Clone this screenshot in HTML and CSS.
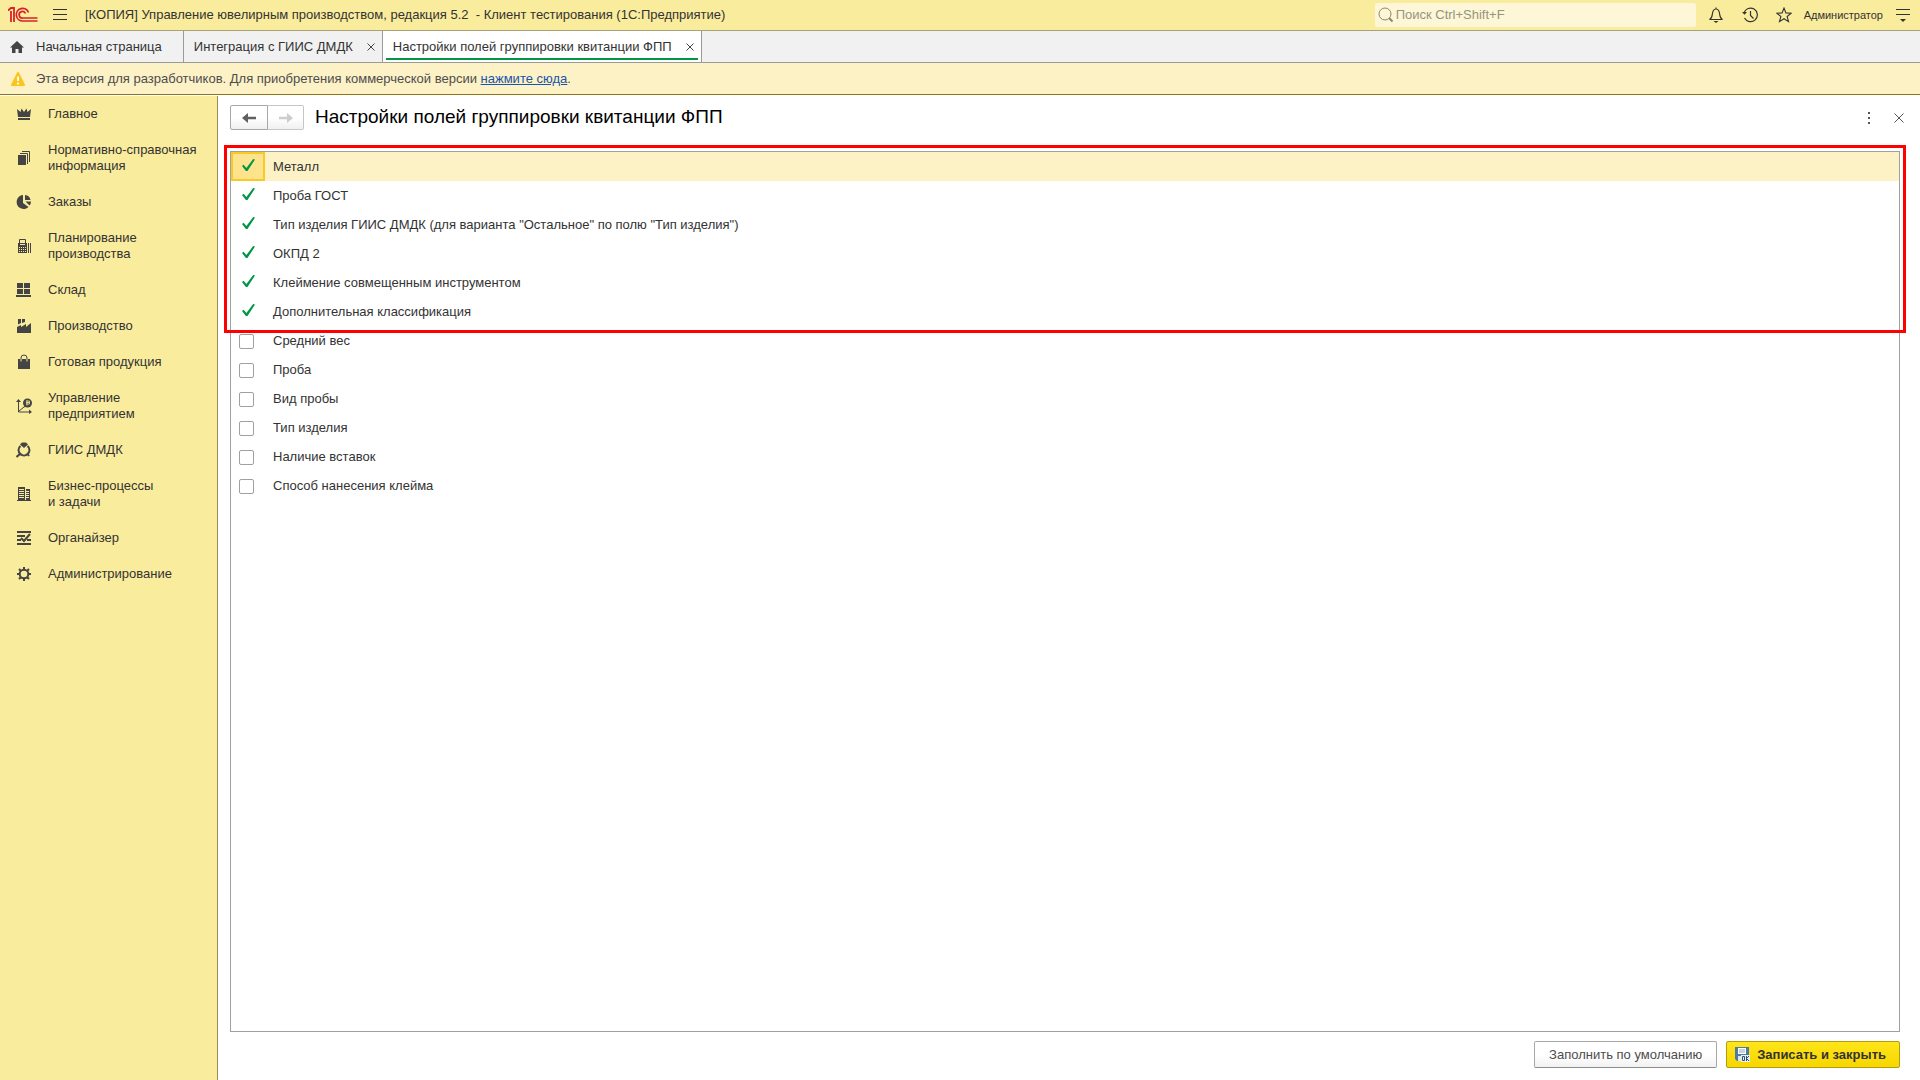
FILE: index.html
```html
<!DOCTYPE html>
<html lang="ru">
<head>
<meta charset="utf-8">
<title>Настройки полей группировки квитанции ФПП</title>
<link rel="stylesheet" href="styles.css">
</head>
<body>
<header class="topbar">
  <svg class="logo" width="30" height="16" viewBox="0 0 30 16" fill="none" stroke="#d8222a" stroke-width="2"><path d="M0 3.500L3 1h3v14M3 4v11" stroke-width="1.800"/><path d="M20.500 5.500A6.300 6.300 0 1 0 15 14h14.500" stroke-width="1.700"/><path d="M17.500 6.500A3.300 3.300 0 1 0 15 11h14.500" stroke-width="1.700"/></svg>
  <button class="icon-button menu-button" aria-label="Главное меню"><svg width="14" height="12" viewBox="0 0 14 12" stroke="#333"><path d="M0 .5h14M0 5.500h14M0 10.500h14"/></svg></button>
  <div class="app-title">[КОПИЯ] Управление ювелирным производством, редакция 5.2&nbsp; - Клиент тестирования (1С:Предприятие)</div>
  <label class="search">
    <svg width="16" height="16" viewBox="0 0 16 16" fill="none" stroke="#8d8768"><circle cx="7" cy="7" r="6"/><path d="M11 11l3.500 3.500" stroke-width="2"/></svg>
    <input type="text" placeholder="Поиск Ctrl+Shift+F" aria-label="Поиск">
  </label>
  <div class="tools">
    <button class="icon-button" aria-label="Уведомления"><svg width="16" height="16" viewBox="0 0 16 16" fill="none" stroke="#333" stroke-width="1.200"><path d="M8 .5v1.500M1.500 12.500c2-1 2.500-2.500 2.800-5C4.600 4 5.500 2 8 2s3.400 2 3.700 5.500c.3 2.500.8 4 2.800 5z"/><path d="M5.500 14h5L8 16z" fill="#333" stroke="none"/></svg></button>
    <button class="icon-button" aria-label="История"><svg width="16" height="16" viewBox="0 0 16 16" fill="none" stroke="#333" stroke-width="1.200"><path d="M2 6a6.800 6.800 0 1 1 .5 5M8.500 4v4.500l3 3"/><path d="M0 5h5L2.500 7.800z" fill="#333" stroke="none"/></svg></button>
    <button class="icon-button" aria-label="Избранное"><svg width="16" height="16" viewBox="0 0 16 16" fill="none" stroke="#333" stroke-width="1.100"><path d="M8 1l1.900 4.900 5.300.3-4.100 3.300 1.400 5.100L8 11.700l-4.500 2.900 1.400-5.100L.8 6.200l5.300-.3z"/></svg></button>
  </div>
  <a class="user" href="#">Администратор</a>
  <button class="icon-button" aria-label="Сервис"><svg width="14" height="14" viewBox="0 0 14 14" stroke="#333"><path d="M0 1.500h14M0 6.500h14"/><path d="M4 11h6l-3 3z" fill="#333" stroke="none"/></svg></button>
</header>

<nav class="tabs">
  <a class="tab home" href="#"><svg width="14" height="12" viewBox="0 0 14 12" fill="#444"><path d="M7 0l7 6.500h-2V12H8.500V8h-3v4H2V6.500H0z"/></svg>Начальная страница</a>
  <div class="tab"><a href="#">Интеграция с ГИИС ДМДК</a><button class="icon-button" aria-label="Закрыть"><svg width="8" height="8" viewBox="0 0 8 8" stroke="#444"><path d="M.5.5l7 7M7.500.5l-7 7"/></svg></button></div>
  <div class="tab active"><a href="#">Настройки полей группировки квитанции ФПП</a><button class="icon-button" aria-label="Закрыть"><svg width="8" height="8" viewBox="0 0 8 8" stroke="#444"><path d="M.5.5l7 7M7.500.5l-7 7"/></svg></button></div>
</nav>

<div class="notice">
  <svg width="14" height="14" viewBox="0 0 14 14"><path d="M7 1l6 12H1z" fill="#fbc51d" stroke="#fbc51d" stroke-width="2" stroke-linejoin="round"/><path d="M7 4.500v4.500M7 10.500v2" stroke="#fff" stroke-width="1.800"/></svg>
  <p>Эта версия для разработчиков. Для приобретения коммерческой версии <a href="#">нажмите сюда</a>.</p>
</div>

<div class="workspace">
  <nav class="sidebar">
    <a href="#"><svg width="16" height="16" viewBox="0 0 16 16"><path d="M1 3l3.500 3L5.500 2.500 8 6l2.500-3.500L11.500 6 15 3l-1 8H2zM2 12h12v2H2z"/></svg>Главное</a>
    <a href="#"><svg width="16" height="16" viewBox="0 0 16 16"><path d="M2 5h8v10H2z"/><path class="line" d="M4 3.500h7.500V14M6 1.500h7.500V12"/></svg>Нормативно-справочная<br>информация</a>
    <a href="#"><svg width="16" height="16" viewBox="0 0 16 16"><path d="M7 1v8l5.500 4A7 7 0 1 1 7 1z"/><path d="M9 1a6 6 0 0 1 5.500 5H9zM9.500 7.500H15a6 6 0 0 1-1.500 4z"/></svg>Заказы</a>
    <a href="#"><svg width="16" height="16" viewBox="0 0 16 16"><path d="M2 5h9v10H2z"/><path class="line" d="M3.500 6V1.500h6V6M12.500 5v10M14.500 5v10"/><path class="cut" d="M4 6.500h5"/><path class="cut" d="M3 9.500h8M3 11.500h8M3 13.500h8" stroke-dasharray="1 1"/></svg>Планирование<br>производства</a>
    <a href="#"><svg width="16" height="16" viewBox="0 0 16 16"><path d="M1 1h6v5H1zM8 1h6v5H8zM1 7h6v5H1zM8 7h6v5H8zM0 13h15v2H0z"/></svg>Склад</a>
    <a href="#"><svg width="16" height="16" viewBox="0 0 16 16"><path d="M1 15V9l4-2v2l5-3v3l5-4v10zM2 1h3v4L2 6.500zM6 1h3v3L6 5z"/></svg>Производство</a>
    <a href="#"><svg width="16" height="16" viewBox="0 0 16 16"><path d="M2 5h12v10H2z"/><path class="line" d="M5 5V4a3 3 0 0 1 6 0v1"/><path class="cut" d="M5 5v2.500M11 5v2.500"/></svg>Готовая продукция</a>
    <a href="#"><svg width="16" height="16" viewBox="0 0 16 16"><path class="line" d="M2.500 2v12H14M3 13l5-4 2-1"/><path d="M0 4l2.500-3L5 4zM13 11.500l3 2.500-3 2z"/><circle cx="11.500" cy="5" r="4.500"/><path class="cut" d="M10 3h3.500v3H10M10 4.500h3M11 2.500v5" stroke-width=".8"/></svg>Управление<br>предприятием</a>
    <a href="#"><svg width="16" height="16" viewBox="0 0 16 16"><path d="M4 2.500l2-2h4l2 2-4 3.500z"/><path class="line thick" d="M4.500 4A5 5 0 0 0 4.500 12a5 5 0 0 0 7 0 5 5 0 0 0 0-8M11.500 12l1.500 2M4.500 11.500L.5 15"/></svg>ГИИС ДМДК</a>
    <a href="#"><svg width="16" height="16" viewBox="0 0 16 16"><path d="M2 1h7v13H2zM10 3h4v11h-4zM1 14h14v1H1z"/><path class="cut" d="M3 3.500h5M3 5.500h5M3 7.500h5M3 9.500h5M3 11.500h5M10 5.500h3M10 7.500h3M10 9.500h3M10 11.500h3"/></svg>Бизнес-процессы<br>и задачи</a>
    <a href="#"><svg width="16" height="16" viewBox="0 0 16 16"><path d="M1 1h14v2H1zM1 5h8v2H1zM1 9h4v2H1zM11 9h4v2h-4zM1 13h14v2H1z"/><path class="line thick" d="M5 8l3 3 6-7"/></svg>Органайзер</a>
    <a href="#"><svg width="16" height="16" viewBox="0 0 16 16"><circle class="line thick" cx="8" cy="8" r="4.300"/><path class="line thick" d="M8 1v3M8 12v3M1 8h3M12 8h3M3 3l2 2M11 11l2 2M3 13l2-2M11 5l2-2"/></svg>Администрирование</a>
  </nav>

  <main class="form">
    <div class="form-head">
      <div class="history">
        <button aria-label="Назад"><svg width="14" height="10" viewBox="0 0 14 10" fill="#606060"><path d="M0 5l6-5v3.700h8v2.600H6V10z"/></svg></button>
        <button aria-label="Вперед" disabled><svg width="14" height="10" viewBox="0 0 14 10" fill="#cdcdcd"><path d="M14 5L8 0v3.700H0v2.600h8V10z"/></svg></button>
      </div>
      <h1>Настройки полей группировки квитанции ФПП</h1>
      <button class="icon-button" aria-label="Еще"><svg width="4" height="12" viewBox="0 0 4 12" fill="#555"><path d="M1 0h2v2H1zM1 5h2v2H1zM1 10h2v2H1z"/></svg></button>
      <button class="icon-button" aria-label="Закрыть"><svg width="10" height="10" viewBox="0 0 10 10" stroke="#555"><path d="M.5.5l9 9M9.500.5l-9 9"/></svg></button>
    </div>

    <div class="list-area">
      <ul class="fields">
        <li class="selected"><label><span class="tick"><input type="checkbox" checked></span>Металл</label></li>
        <li><label><span class="tick"><input type="checkbox" checked></span>Проба ГОСТ</label></li>
        <li><label><span class="tick"><input type="checkbox" checked></span>Тип изделия ГИИС ДМДК (для варианта "Остальное" по полю "Тип изделия")</label></li>
        <li><label><span class="tick"><input type="checkbox" checked></span>ОКПД 2</label></li>
        <li><label><span class="tick"><input type="checkbox" checked></span>Клеймение совмещенным инструментом</label></li>
        <li><label><span class="tick"><input type="checkbox" checked></span>Дополнительная классификация</label></li>
        <li><label><span class="tick"><input type="checkbox"></span>Средний вес</label></li>
        <li><label><span class="tick"><input type="checkbox"></span>Проба</label></li>
        <li><label><span class="tick"><input type="checkbox"></span>Вид пробы</label></li>
        <li><label><span class="tick"><input type="checkbox"></span>Тип изделия</label></li>
        <li><label><span class="tick"><input type="checkbox"></span>Наличие вставок</label></li>
        <li><label><span class="tick"><input type="checkbox"></span>Способ нанесения клейма</label></li>
      </ul>
      <div class="highlight"></div>
    </div>

    <div class="actions">
      <button class="action">Заполнить по умолчанию</button>
      <button class="action primary"><svg width="15" height="15" viewBox="0 0 15 15"><path d="M0 0h14v14H2l-2-2z" fill="#4d7ba3"/><path d="M3 1h8v6H3z" fill="#fff"/><path d="M4 3h6M4 5h6" stroke="#8aa9c4"/><path d="M3 9h3v5H3z" fill="#dce6ee"/><path d="M6 8h9v7H6z" fill="#e9eef2"/><path d="M7.500 9.500h2v4h-2zM11.500 9v5M14 9l-2.500 2.500L14 14" fill="none" stroke="#2d5070"/></svg>Записать и закрыть</button>
    </div>
  </main>
</div>
</body>
</html>
```
FILE: styles.css
```css
* { box-sizing: border-box; }

body {
  margin: 0;
  min-height: 100vh;
  display: flex;
  flex-direction: column;
  background: #fff;
  color: #333;
  font: 13px/16px "Liberation Sans", Arial, sans-serif;
}

a { color: inherit; text-decoration: none; }
svg { display: block; flex: none; }
button, input { font: inherit; color: inherit; }

.icon-button {
  display: flex;
  padding: 0;
  border: 0;
  background: none;
}

/* Title bar */
.topbar {
  display: flex;
  align-items: center;
  height: 31px;
  padding: 0 10px 0 8px;
  background: #faec9d;
  border-bottom: 1px solid #a9a179;
}
.menu-button { margin-left: 15px; }
.app-title { flex: 1; margin-left: 18px; white-space: nowrap; }
.search {
  display: flex;
  align-items: center;
  gap: 2px;
  width: 321px;
  height: 24px;
  padding-left: 3px;
  border-radius: 2px;
  background: #fdf7d8;
}
.search input {
  flex: 1;
  min-width: 0;
  padding: 0;
  border: 0;
  outline: 0;
  background: none;
}
.search input::placeholder { color: #98937c; opacity: 1; }
.tools { display: flex; gap: 18px; margin: 0 12px; }
.user { margin-right: 13px; font-size: 11px; }

/* Open windows */
.tabs {
  display: flex;
  height: 32px;
  background: #f1f1f1;
  border-bottom: 1px solid #9a9a9a;
}
.tab {
  position: relative;
  display: flex;
  align-items: center;
  gap: 14px;
  padding: 0 7px 0 10px;
  border-right: 1px solid #9a9a9a;
  white-space: nowrap;
}
.tab.home { gap: 12px; padding: 0 21px 0 10px; }
.tab.active { background: #fff; }
.tab.active::after {
  content: "";
  position: absolute;
  left: 3px;
  right: 3px;
  bottom: 2px;
  height: 2px;
  background: #009646;
}

/* Developer notice */
.notice {
  display: flex;
  align-items: center;
  gap: 11px;
  height: 32px;
  padding-left: 11px;
  background: #fdf1c6;
  border-bottom: 1px solid #8e7519;
  color: #4d4d4d;
}
.notice p { margin: 0; }
.notice a { color: #1a54ab; text-decoration: underline; }

/* Sections */
.workspace { flex: 1; display: flex; padding-top: 1px; }
.sidebar {
  flex: none;
  width: 218px;
  background: #faec9d;
  border-right: 1px solid #968d58;
}
.sidebar a {
  display: flex;
  align-items: center;
  gap: 16px;
  padding: 10px 0 10px 16px;
}
.sidebar svg { fill: #444; }
.sidebar .line { fill: none; stroke: #444; }
.sidebar .thick { stroke-width: 2; }
.sidebar .cut { fill: none; stroke: #faec9d; }

/* Form */
.form {
  flex: 1;
  display: flex;
  flex-direction: column;
  padding: 9px 20px 12px 12px;
}
.form-head { display: flex; align-items: center; height: 25px; }
.history { display: flex; height: 25px; }
.history button {
  display: flex;
  align-items: center;
  justify-content: center;
  width: 38px;
  padding: 0;
  border: 1px solid #a8a8a8;
  border-radius: 2px 0 0 2px;
  background: linear-gradient(#fff 50%, #f0f0f0);
}
.history button + button {
  width: 36px;
  border-left: 0;
  border-color: #c6c6c6;
  border-radius: 0 2px 2px 0;
}
.form h1 {
  flex: 1;
  margin: 0 0 0 11px;
  padding-bottom: 2px;
  color: #000;
  font-size: 19px;
  font-weight: 400;
  line-height: 24px;
}
.form-head .icon-button + .icon-button { margin: 0 -4px 0 23px; }

.list-area { position: relative; flex: 1; display: flex; margin-top: 21px; }
.fields {
  flex: 1;
  margin: 0;
  padding: 0;
  border: 1px solid #a0a0a0;
  list-style: none;
}
.fields label { display: flex; align-items: center; height: 29px; gap: 8px; }
.fields .selected { background: #fdf1c6; }
.tick {
  display: flex;
  align-items: center;
  align-self: stretch;
  width: 34px;
  padding-left: 8px;
}
.selected .tick {
  padding-left: 6px;
  border: 2px solid #fbc926;
  background: #fee38d;
}
.tick input {
  appearance: none;
  width: 15px;
  height: 15px;
  margin: 2px 0 0;
  border: 1px solid #a0a0a0;
  border-radius: 2px;
  background: #fff;
}
.tick input:checked {
  width: 13px;
  height: 12px;
  margin: 0 0 3px 3px;
  border: 0;
  border-radius: 0;
  background: #009646;
  clip-path: polygon(0 58%, 12% 48%, 34% 74%, 86% 0, 100% 4%, 42% 100%, 30% 100%);
}
/* Frame over the rows that take part in the grouping */
.highlight {
  position: absolute;
  top: -6px;
  left: -6px;
  right: -6px;
  height: 188px;
  border: 3px solid #f00;
  pointer-events: none;
}

.actions { display: flex; justify-content: flex-end; gap: 9px; margin-top: 9px; }
.action {
  display: flex;
  align-items: center;
  justify-content: center;
  gap: 7px;
  height: 27px;
  padding: 0 14px;
  border: 1px solid #a8a8a8;
  border-bottom-color: #8c8c8c;
  border-radius: 2px;
  background: linear-gradient(#fff 50%, #f2f2f2);
  color: #4d4d4d;
}
.action.primary {
  padding: 0 13px 0 8px;
  border-color: #b19d10;
  background: linear-gradient(#ffe51a, #f7d600);
  color: #333;
  font-weight: 700;
}
```
